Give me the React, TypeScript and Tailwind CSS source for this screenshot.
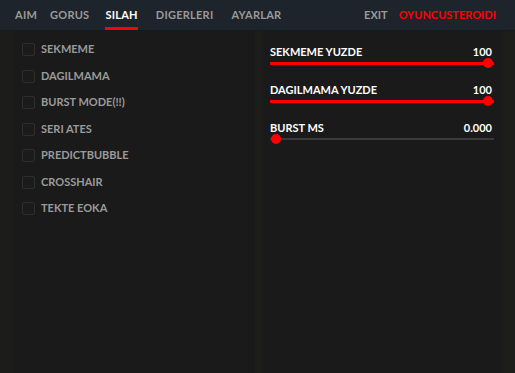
import React from "react";

const tabs = [
  { t: "AIM", ml: "ml-[15px]" },
  { t: "GORUS", ml: "ml-[13px]" },
  { t: "SILAH", ml: "ml-[16px]" },
  { t: "DIGERLERI", ml: "ml-[18px]" },
  { t: "AYARLAR", ml: "ml-[18px]" },
];
const checks = ["SEKMEME", "DAGILMAMA", "BURST MODE(!!)", "SERI ATES", "PREDICTBUBBLE", "CROSSHAIR", "TEKTE EOKA"];
const sliders = [
  { label: "SEKMEME YUZDE", value: "100", pct: 100 },
  { label: "DAGILMAMA YUZDE", value: "100", pct: 100 },
  { label: "BURST MS", value: "0.000", pct: 0 },
];

export default function App() {
  return (
    <div
      className="w-[515px] h-[373px] bg-[#1a1a1a] flex flex-col overflow-hidden"
      style={{ fontFamily: "Lato, 'Open Sans', sans-serif" }}
    >
      <div className="h-[31px] bg-[#1e242b] border-b border-[#161b20] flex items-end pr-[19px] shrink-0">
        {tabs.map(({ t, ml }) => (
          <div
            key={t}
            className={`h-full flex items-center ${ml} text-[11px] font-bold tracking-[0.25px] border-b-[3px] ${
              t === "SILAH" ? "text-white border-[#ff0000]" : "text-[#9a9a9a] border-transparent"
            }`}
          >
            <span className="pt-[3px]">{t}</span>
          </div>
        ))}
        <div className="flex-1" />
        <div className="h-full flex items-center text-[11px] font-bold text-[#9a9a9a] mr-[11px]">EXIT</div>
        <div className="h-full flex items-center text-[11px] font-bold text-[#ff0000]">OYUNCUSTEROIDI</div>
      </div>
      <div className="flex-1 flex">
        <div className="w-[14px] bg-[#1c1c1b]" />
        <div className="w-[241px] flex flex-col gap-[13.5px] pl-[8px] pt-[12px]">
          {checks.map((c) => (
            <div key={c} className="flex items-center h-[13px]">
              <div className="w-[13px] h-[13px] rounded-[2px] border border-[#2e2e2e] bg-[#1b1b1b]" />
              <span className="ml-[6px] text-[11px] font-bold text-[#9a9a9a]">{c}</span>
            </div>
          ))}
        </div>
        <div className="w-[7px] bg-[#1d1d1c]" />
        <div className="w-[240px] flex flex-col gap-[15px] pl-[8px] pr-[8px] pt-[14px]">
          {sliders.map((s) => (
            <div key={s.label} className="flex flex-col">
              <div className="flex justify-between text-[11px] font-bold text-white leading-[13px]">
                <span>{s.label}</span>
                <span className="pr-[2px]">{s.value}</span>
              </div>
              <div className="relative h-[10px] flex items-center">
                <div className="w-full h-[2px] bg-[#3a3a3a]" />
                <div className="absolute left-0 h-[3px] bg-[#ff0000]" style={{ width: `${s.pct}%` }} />
                <div
                  className="absolute w-[10px] h-[10px] rounded-full bg-[#ff0000]"
                  style={{ left: s.pct === 100 ? "calc(100% - 11px)" : "1px" }}
                />
              </div>
            </div>
          ))}
        </div>
        <div className="flex-1 bg-[#1d1d1c]" />
      </div>
    </div>
  );
}
